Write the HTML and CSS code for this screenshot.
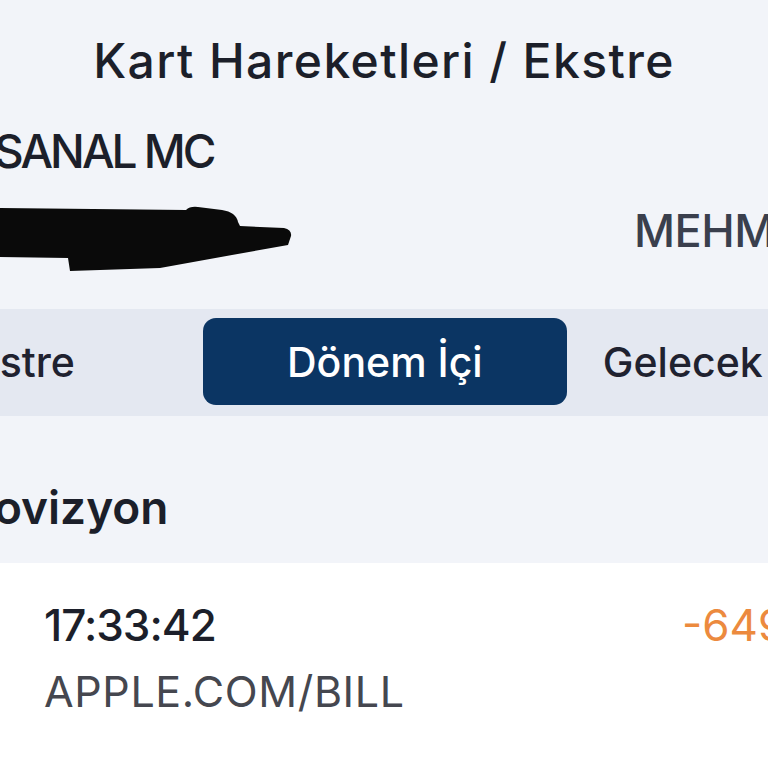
FILE: index.html
```html
<!DOCTYPE html>
<html lang="tr">
<head>
<meta charset="utf-8">
<title>Kart Hareketleri / Ekstre</title>
<link rel="stylesheet" href="styles.css">
</head>
<body>
<div class="screen">
  <h1 class="title">Kart Hareketleri / Ekstre</h1>
  <div class="card-name">SANAL MC</div>
  <div class="card-row">
    <svg class="redact" width="292" height="66" viewBox="0 206 292 66" aria-hidden="true">
      <path d="M0,208 L186,210 Q190,206 198,207 L222,210 Q236,212 238,222 L240,226 L284,228 Q292,230 291,236 L288,245 L232,255 L160,268 L70,271 L68,258 L0,257 Z" fill="#0a0a0a"/>
    </svg>
    <div class="holder">MEHMET YILMAZ</div>
  </div>
  <nav class="tabs">
    <div class="tab">Ekstre</div>
    <div class="tab tab-active">Dönem İçi</div>
    <div class="tab tab-next">Gelecek</div>
  </nav>
  <div class="section-title">Provizyon</div>
  <div class="tx">
    <div class="tx-time">17:33:42</div>
    <div class="tx-amount">-649,99 TL</div>
    <div class="tx-desc">APPLE.COM/BILL</div>
  </div>
</div>
</body>
</html>
```

FILE: styles.css
```css
html, body {
  margin: 0;
  padding: 0;
}
body {
  background: #f2f4f9;
  font-family: Inter, "Noto Sans", sans-serif;
  color: #1c1f2a;
  overflow: hidden;
}
.screen {
  width: 768px;
  height: 768px;
  overflow: hidden;
  display: flex;
  flex-direction: column;
}
.title {
  margin: 0;
  padding-top: 33px;
  font-size: 48px;
  line-height: 56px;
  font-weight: 500;
  text-align: center;
  letter-spacing: 1.4px;
  white-space: nowrap;
}
.card-name {
  margin-top: 34px;
  margin-left: -6px;
  font-size: 46px;
  line-height: 56px;
  font-weight: 500;
  letter-spacing: -3px;
  white-space: nowrap;
}
.card-row {
  margin-top: 24px;
  height: 106px;
  flex: none;
  display: flex;
  align-items: flex-start;
  white-space: nowrap;
}
.redact {
  display: block;
  margin-top: 3px;
  flex: none;
}
.holder {
  margin-left: 342px;
  font-size: 45px;
  line-height: 56px;
  font-weight: 500;
  color: #3a3f4d;
  letter-spacing: -0.5px;
}
.tabs {
  background: #e4e8f1;
  height: 107px;
  flex: none;
  box-sizing: border-box;
  padding: 9px 0 11px;
  display: flex;
  align-items: stretch;
  white-space: nowrap;
}
.tab {
  display: flex;
  align-items: center;
  font-size: 41px;
  font-weight: 500;
  color: #1f2230;
  flex: none;
}
.tab:first-child {
  margin-left: -48px;
}
.tab-active {
  margin-left: 128px;
  width: 364px;
  justify-content: center;
  background: #0b3563;
  color: #ffffff;
  border-radius: 13px;
}
.tab-next {
  margin-left: 36px;
}
.section-title {
  flex: none;
  padding: 63px 0 28px;
  margin-left: -53px;
  font-size: 46px;
  line-height: 56px;
  font-weight: 600;
  white-space: nowrap;
}
.tx {
  flex: 1;
  background: #ffffff;
  padding: 34px 0 0 44px;
  display: grid;
  grid-template-columns: 638px auto;
  align-content: start;
  white-space: nowrap;
}
.tx-time {
  font-size: 44px;
  line-height: 56px;
  font-weight: 500;
  letter-spacing: -1px;
  color: #1c1f2a;
}
.tx-amount {
  font-size: 44px;
  line-height: 56px;
  font-weight: 400;
  color: #ec8a3e;
}
.tx-desc {
  grid-column: 1 / 3;
  margin-top: 10px;
  font-size: 43px;
  line-height: 56px;
  font-weight: 400;
  letter-spacing: 0.6px;
  color: #45474f;
}
```
